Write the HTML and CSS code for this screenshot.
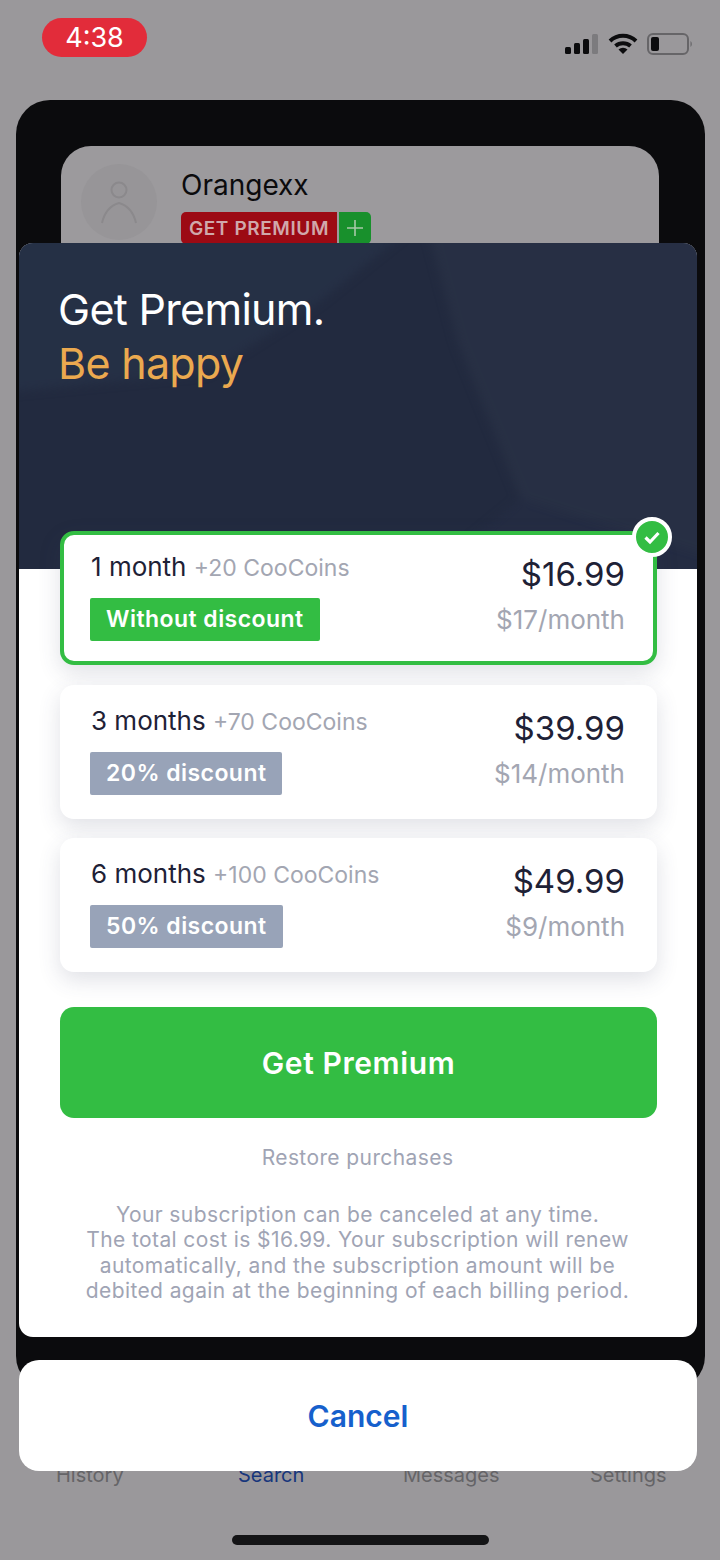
FILE: index.html
```html
<!DOCTYPE html>
<html lang="en">
<head>
    <meta charset="UTF-8">
    <meta name="viewport" content="width=device-width, initial-scale=1.0">
    <title>Get Premium</title>
    <link rel="stylesheet" href="styles.css">
</head>
<body>

<div class="screen">
    <div class="status-bar">
        <div class="time">4:38</div>
        <div class="status-icons">
            <svg width="34" height="22" viewBox="0 0 34 22">
                <rect x="0" y="14" width="6" height="7" rx="1.5" fill="#0c0c0e"/>
                <rect x="9" y="10" width="6" height="11" rx="1.5" fill="#0c0c0e"/>
                <rect x="18" y="6" width="6" height="15" rx="1.5" fill="#0c0c0e"/>
                <rect x="27" y="1" width="6" height="20" rx="1.5" fill="#7c7b7e"/>
            </svg>
            <svg width="30" height="22" viewBox="0 0 30 22">
                <path d="M2 8 A19 19 0 0 1 28 8" fill="none" stroke="#0c0c0e" stroke-width="4"/>
                <path d="M7.5 13 A11.5 11.5 0 0 1 22.5 13" fill="none" stroke="#0c0c0e" stroke-width="4"/>
                <path d="M15 21 L10.5 16.5 A6.5 6.5 0 0 1 19.5 16.5 Z" fill="#0c0c0e"/>
            </svg>
            <svg width="46" height="22" viewBox="0 0 46 22">
                <rect x="1" y="1" width="40" height="20" rx="5" fill="none" stroke="#666568" stroke-width="2"/>
                <rect x="4" y="4" width="8" height="14" rx="2" fill="#0c0c0e"/>
                <path d="M43.5 8 A4 4 0 0 1 43.5 14 Z" fill="#666568"/>
            </svg>
        </div>
    </div>

    <div class="panel">
        <div class="profile-card">
            <div class="avatar">
                <svg width="40" height="52" viewBox="0 0 40 52">
                    <circle cx="20" cy="14" r="7.5" fill="none" stroke="#8b898c" stroke-width="2"/>
                    <path d="M3 47 C6 34 13 29 20 27 C27 29 34 34 37 47" fill="none" stroke="#8b898c" stroke-width="2"/>
                </svg>
            </div>
            <div class="profile-info">
                <div class="profile-name">Orangexx</div>
                <div class="profile-tags">
                    <span class="tag-premium">GET PREMIUM</span>
                    <span class="tag-plus">
                        <svg width="18" height="18" viewBox="0 0 18 18">
                            <path d="M9 1 V17 M1 9 H17" stroke="#a8c8a8" stroke-width="1.6"/>
                        </svg>
                    </span>
                </div>
            </div>
        </div>
    </div>

    <div class="tabs">
        <span class="tab">History</span>
        <span class="tab tab-active">Search</span>
        <span class="tab">Messages</span>
        <span class="tab">Settings</span>
    </div>

    <div class="home-bar"></div>

    <div class="sheet-wrap">
        <div class="sheet">
            <div class="sheet-head">
                <svg class="head-shapes" viewBox="0 0 680 326" preserveAspectRatio="none">
                    <path d="M-20 -20 L400 -20 L300 60 L190 130 L-20 150 Z" fill="#2b374e" opacity="0.45"/>
                    <path d="M408 -20 L700 -20 L700 316 L503 256 L440 100 Z" fill="#2b3348" opacity="0.6"/>
                    <path d="M503 256 L700 316 L700 340 L400 340 Z" fill="#262e45" opacity="0.5"/>
                </svg>
                <h1 class="head-title">Get Premium.<br><span class="head-accent">Be happy</span></h1>
            </div>

            <div class="plans">
                <div class="plan plan-selected">
                    <div class="plan-left">
                        <div class="plan-name">1 month <span class="plan-bonus">+20 CooCoins</span></div>
                        <span class="plan-badge badge-green">Without discount</span>
                    </div>
                    <div class="plan-right">
                        <div class="plan-price">$16.99</div>
                        <div class="plan-monthly">$17/month</div>
                    </div>
                    <div class="plan-check">
                        <svg width="22" height="22" viewBox="0 0 22 22">
                            <path d="M4.5 11.5 L9 16 L17.5 7" fill="none" stroke="#fff" stroke-width="3.2"/>
                        </svg>
                    </div>
                </div>

                <div class="plan">
                    <div class="plan-left">
                        <div class="plan-name">3 months <span class="plan-bonus">+70 CooCoins</span></div>
                        <span class="plan-badge">20% discount</span>
                    </div>
                    <div class="plan-right">
                        <div class="plan-price">$39.99</div>
                        <div class="plan-monthly">$14/month</div>
                    </div>
                </div>

                <div class="plan">
                    <div class="plan-left">
                        <div class="plan-name">6 months <span class="plan-bonus">+100 CooCoins</span></div>
                        <span class="plan-badge">50% discount</span>
                    </div>
                    <div class="plan-right">
                        <div class="plan-price">$49.99</div>
                        <div class="plan-monthly">$9/month</div>
                    </div>
                </div>

                <button class="buy-button">Get Premium</button>
                <div class="restore">Restore purchases</div>
                <p class="legal">Your subscription can be canceled at any time.<br>The total cost is $16.99. Your subscription will renew<br>automatically, and the subscription amount will be<br>debited again at the beginning of each billing period.</p>
            </div>
        </div>

        <button class="cancel-button">Cancel</button>
    </div>
</div>

</body>
</html>
```

FILE: styles.css
```css
* {
    box-sizing: border-box;
}
body {
    margin: 0;
    font-family: 'Inter', 'Roboto', sans-serif;
    background-color: #9a989b;
}
.screen {
    position: relative;
    width: 720px;
    height: 1560px;
    overflow: hidden;
    background-color: #9a989b;
    padding-top: 18px;
}
.status-bar {
    display: flex;
    justify-content: space-between;
    align-items: flex-start;
    height: 82px;
    padding: 0 27px 0 42px;
}
.time {
    width: 105px;
    height: 39px;
    border-radius: 20px;
    background-color: #e22c3a;
    color: #fff;
    font-size: 27px;
    line-height: 39px;
    text-align: center;
}
.status-icons {
    display: flex;
    align-items: center;
    gap: 9px;
    padding-top: 15px;
}
.panel {
    width: 689px;
    height: 1290px;
    margin-left: 16px;
    padding: 46px 46px 0 45px;
    background-color: #0b0b0d;
    border-radius: 34px;
}
.profile-card {
    display: flex;
    height: 200px;
    padding: 18px 20px;
    gap: 24px;
    background-color: #9c9a9d;
    border-radius: 30px 30px 0 0;
}
.avatar {
    display: flex;
    align-items: center;
    justify-content: center;
    width: 76px;
    height: 76px;
    border-radius: 50%;
    background-color: #979598;
}
.profile-name {
    font-size: 28px;
    line-height: 32px;
    color: #0b0b0d;
    margin-top: 5px;
}
.profile-tags {
    display: flex;
    gap: 2px;
    margin-top: 11px;
}
.tag-premium {
    width: 156px;
    height: 32px;
    padding-top: 5px;
    background-color: #9c0a14;
    border-radius: 5px 0 0 5px;
    color: #d0a8ab;
    font-size: 19px;
    font-weight: 600;
    line-height: 24px;
    text-align: center;
    letter-spacing: 0.6px;
}
.tag-plus {
    display: flex;
    align-items: center;
    justify-content: center;
    width: 32px;
    height: 32px;
    background-color: #18902c;
    border-radius: 0 5px 5px 0;
}
.tabs {
    position: absolute;
    top: 1462px;
    left: 0;
    width: 720px;
    height: 26px;
}
.tab {
    position: absolute;
    font-size: 20px;
    line-height: 26px;
    color: #656467;
}
.tab:nth-child(1) { left: 56px; }
.tab:nth-child(2) { left: 238px; }
.tab:nth-child(3) { left: 403px; }
.tab:nth-child(4) { left: 590px; }
.tab-active {
    color: #17367c;
}
.home-bar {
    position: absolute;
    top: 1535px;
    left: 232px;
    width: 257px;
    height: 10px;
    border-radius: 5px;
    background-color: #141416;
}
.sheet-wrap {
    position: absolute;
    top: 243px;
    left: 19px;
    width: 678px;
}
.sheet {
    position: relative;
    height: 1094px;
    background-color: #fff;
    border-radius: 14px;
    overflow: hidden;
}
.sheet-head {
    position: relative;
    height: 326px;
    padding: 39px 39px;
    background-color: #222a3f;
    overflow: hidden;
}
.head-shapes {
    position: absolute;
    top: 0;
    left: 0;
    width: 100%;
    height: 100%;
    overflow: visible;
    filter: blur(5px);
}
.head-title {
    position: relative;
    margin: 0;
    font-size: 43px;
    font-weight: 400;
    line-height: 54px;
    letter-spacing: -0.7px;
    color: #fff;
}
.head-accent {
    color: #eba94f;
}
.plans {
    position: absolute;
    top: 288px;
    left: 41px;
    width: 597px;
}
.plan {
    position: relative;
    display: flex;
    justify-content: space-between;
    height: 134px;
    margin-bottom: 19px;
    padding: 20px 32px 0 30px;
    background-color: #fff;
    border-radius: 14px;
    box-shadow: 0 8px 22px rgba(60, 70, 100, 0.16);
}
.plan-selected {
    margin-bottom: 20px;
    padding: 16px 28px 0 26px;
    border: 4px solid #33bd43;
}
.plan-name {
    margin-left: 1px;
    font-size: 26px;
    line-height: 32px;
    color: #1e2136;
}
.plan-bonus {
    font-size: 23px;
    color: #a3a6b2;
}
.plan-badge {
    display: inline-block;
    margin-top: 14px;
    padding: 0 16px;
    height: 43px;
    background-color: #98a3b8;
    border-radius: 2px;
    color: #fff;
    font-size: 23px;
    font-weight: 600;
    line-height: 43px;
    letter-spacing: 0.45px;
}
.badge-green {
    background-color: #33bd43;
}
.plan-right {
    text-align: right;
}
.plan-price {
    margin-top: 3px;
    font-size: 33px;
    line-height: 40px;
    color: #1e2136;
}
.plan-monthly {
    margin-top: 6px;
    font-size: 26px;
    line-height: 40px;
    color: #a3a6b2;
}
.plan-check {
    position: absolute;
    top: -18px;
    right: -19px;
    display: flex;
    align-items: center;
    justify-content: center;
    width: 40px;
    height: 40px;
    background-color: #33bd43;
    border: 4px solid #fff;
    border-radius: 50%;
}
.buy-button {
    display: block;
    width: 100%;
    height: 111px;
    margin-top: 35px;
    background-color: #33bd43;
    border: none;
    border-radius: 14px;
    color: #fff;
    font-family: inherit;
    font-size: 30px;
    font-weight: 600;
    letter-spacing: 0.6px;
}
.restore {
    margin-top: 27px;
    padding-right: 2px;
    text-align: center;
    font-size: 21px;
    line-height: 26px;
    letter-spacing: 0.4px;
    color: #a0a4b4;
}
.legal {
    margin: 31px 0 0;
    padding-right: 2px;
    text-align: center;
    font-size: 21px;
    line-height: 25.3px;
    letter-spacing: 0.4px;
    color: #a0a4b4;
}
.cancel-button {
    display: block;
    width: 100%;
    height: 111px;
    margin-top: 23px;
    background-color: #fff;
    border: none;
    border-radius: 20px;
    color: #1660cc;
    font-family: inherit;
    font-size: 30px;
    font-weight: 600;
}
```
